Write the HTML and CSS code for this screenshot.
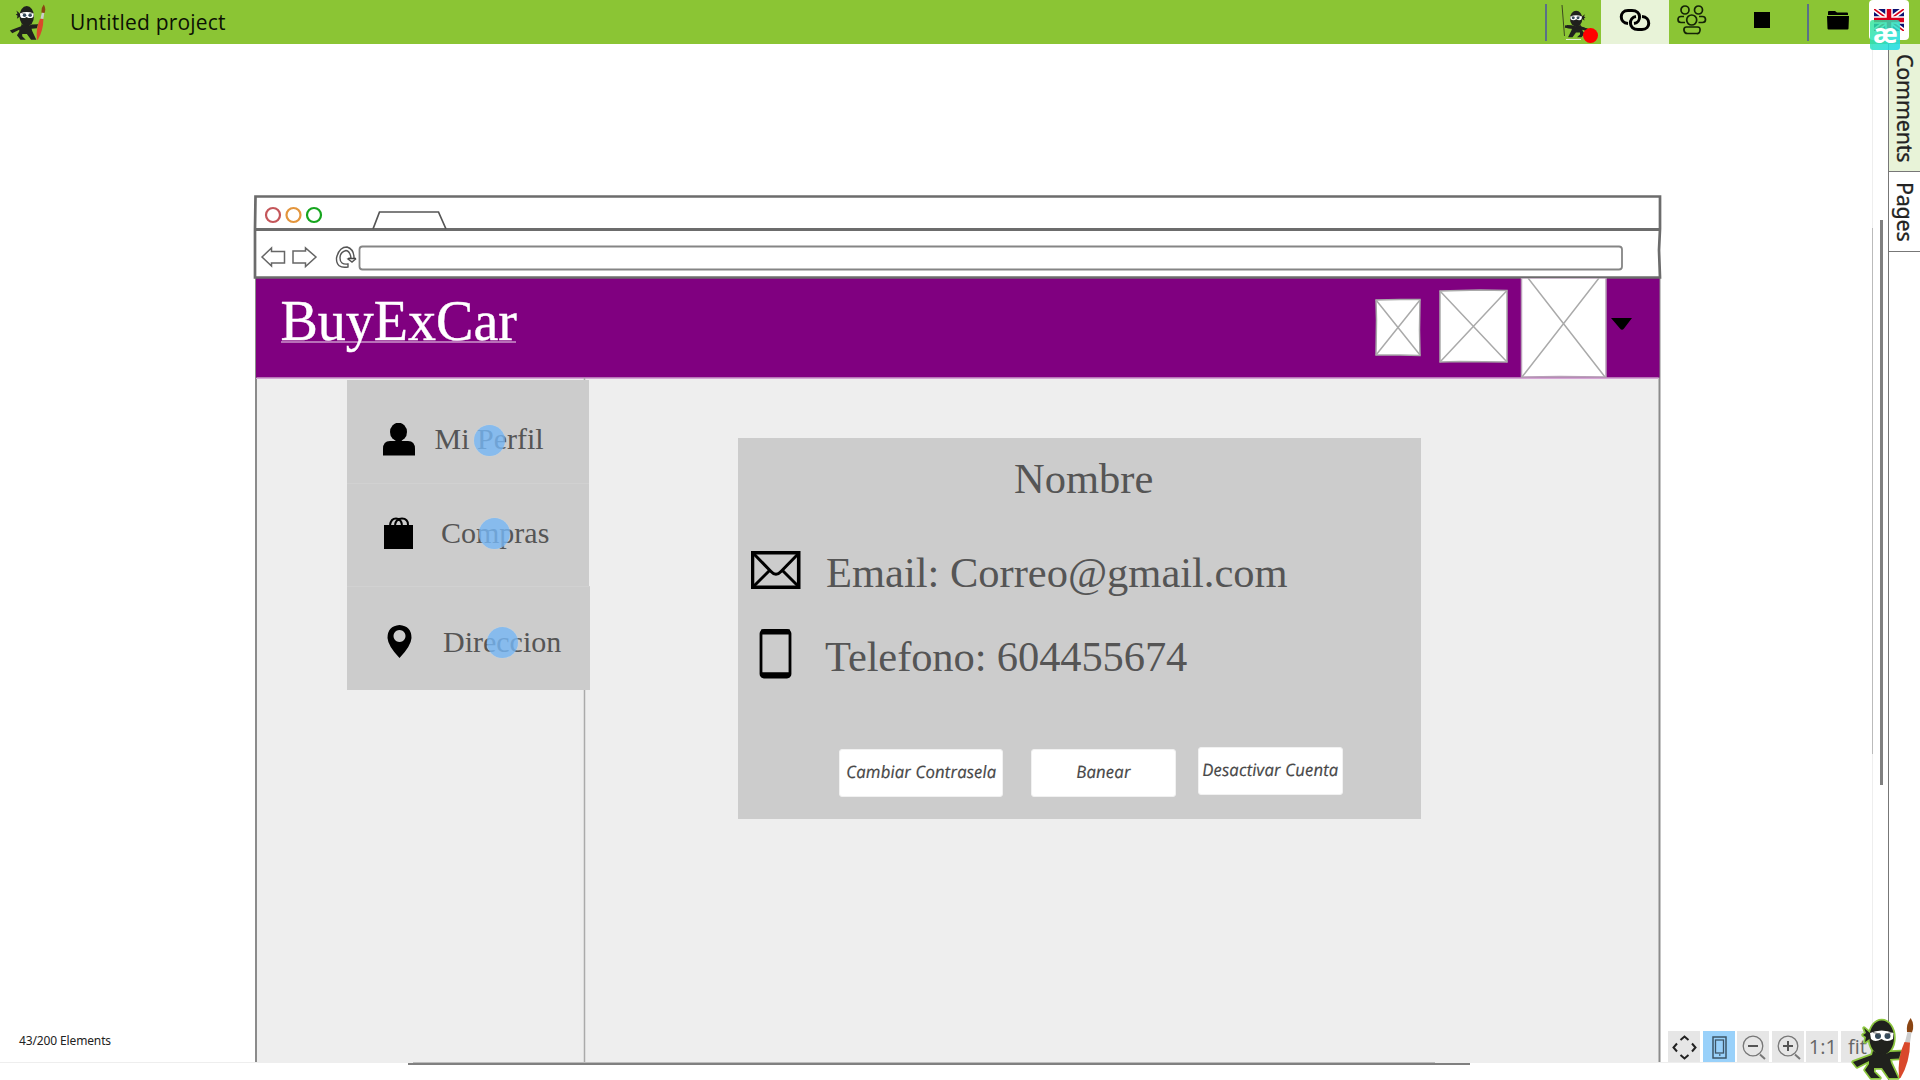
FILE: index.html
```html
<!DOCTYPE html>
<html lang="en">
<head>
<meta charset="utf-8">
<title>Untitled project</title>
<link rel="stylesheet" href="styles.css">
</head>
<body>
<svg class="defs" width="0" height="0">
  <defs>
    <g id="ninja-body">
      <path d="M8 13 L2 8 L4 13 L1 15 L4 17 L3 22 L9 18 Z"/>
      <ellipse cx="19.700" cy="17.800" rx="12.300" ry="17.300"/>
      <path d="M11 31 Q20 37 28 32 L39 31.500 L37 38.500 L28 39 L29 43 L36 58 L27 58 L20 48 L12 48 L12 52 L18 58 L9 58 L3 50 L7 44 L7 41 L-5 47 L-9 42 L10 35 Z"/>
    </g>
    <g id="ninja-face">
      <path d="M8 13 Q19.500 8 31.500 13 L31 19 Q25 23 19.500 19 Q13 23 9 19 Z" fill="#fff"/>
      <circle cx="16" cy="16" r="3" fill="#34495a"/><circle cx="25.500" cy="16" r="3" fill="#34495a"/>
      <path d="M11 12.500L18 14M30 12.500L23.500 14" stroke="#777" stroke-width="1"/>
    </g>
    <g id="brush">
      <path d="M45 12 Q44 4 48.700 -2 Q53 5 50 12.500 Z" fill="#8a4513"/>
      <path d="M45.500 12 L49.500 12.500 L48 22.500 L43 22 Z" fill="#ccc"/>
      <path d="M42.500 22 L48 22.500 Q48 42 38.500 58 L37 58 Q35 38 42.500 22 Z" fill="#d9482b"/>
    </g>
  </defs>
</svg>
<div class="app">
  <header class="topbar">
    <svg class="logo" viewBox="-10 -3 62 63"><use href="#ninja-body" fill="#20211d"/><use href="#ninja-face"/><use href="#brush"/></svg>
    <h1 class="project-name">Untitled project</h1>
    <nav class="tools">
      <i class="divider"></i>
      <span class="tool tool-record">
        <svg width="40" height="44" viewBox="0 0 40 44">
          <path d="M2 5 L4.500 36" stroke="#3c4a20" stroke-width="1"/>
          <g transform="translate(26 10.500) scale(-.5 .46)"><use href="#ninja-body" fill="#20211d"/><use href="#ninja-face"/></g>
          <path d="M16 26L30 31M5 26.500L16 28" stroke="#20211d" stroke-width="2.500"/>
          <path d="M6 39.500h15" stroke="#e5eed8"/>
          <circle cx="30.500" cy="35.500" r="7.500" fill="#f00"/>
        </svg>
      </span>
      <span class="tool tool-link">
        <svg width="32" height="24" viewBox="0 0 32 24" fill="none" stroke="#000" stroke-width="3">
          <path d="M9 15.500 C0 15 0 2.500 9 2.500 H13 C23 2.500 22.500 14.500 15 15.500"/>
          <path d="M23 8.500 C32 9 32 21.500 23 21.500 H19 C9 21.500 9.500 9.500 17 8.500"/>
        </svg>
      </span>
      <span class="tool tool-group">
        <svg width="30" height="30" viewBox="0 0 30 30" fill="none" stroke="#142307" stroke-width="1.700">
          <circle cx="8" cy="5" r="4"/><circle cx="21.500" cy="5" r="4"/><circle cx="14.700" cy="15" r="5"/>
          <path d="M7 11.500H4Q1 11.500 1 14.500T4 17.500H8M22 11.500h3.500q3 0 3 3t-3 3H21.500M9 22h11.500q3 0 2.500 3.500t-3.500 3H10.500q-3 0-3.500-3T9 22"/>
        </svg>
      </span>
      <span class="tool tool-stop"><i class="stop"></i></span>
      <i class="divider"></i>
      <span class="tool tool-folder">
        <svg width="22" height="19" viewBox="0 0 22 19"><path d="M1 5V1Q1 0 2 0H8L10 1.500H20Q21 1.500 21 2.500V4H1ZM0 5H22L21.500 17.500Q21.500 18.500 20.500 18.500H1.500Q.500 18.500 .500 17.500Z"/></svg>
      </span>
      <span class="language">
        <svg width="30" height="22" viewBox="0 0 30 22">
          <path d="M0 0h30v22H0z" fill="#0a1172"/>
          <path d="M0 0L30 22M30 0L0 22" stroke="#fff" stroke-width="5"/>
          <path d="M0 0L30 22M30 0L0 22" stroke="#d8001c" stroke-width="1.700"/>
          <path d="M15 0V22M0 11H30" stroke="#fff" stroke-width="7.500"/>
          <path d="M15 0V22M0 11H30" stroke="#d8001c" stroke-width="4.500"/>
        </svg>
        <b class="ae-badge">æ</b>
      </span>
    </nav>
  </header>

  <main class="workspace">
    <section class="canvas">
      <svg class="wire frame" width="1410" height="868" viewBox="253 194 1410 868" fill="none">
        <path d="M256 278V1064H1659.500V278" fill="#eee" stroke="#8b8b8b" stroke-width="2"/>
        <path d="M256 278H1659.500V377.500H256Z" fill="#800080"/>
        <path d="M256 378.500H1659" stroke="#d4a6d4"/>
        <path d="M255.500 196.500H1660V229L1659 250L1660 277.500H255V229Z" fill="#fff" stroke="#6c6c6c" stroke-width="2.700"/>
        <path d="M255 229.500H1659" stroke="#6c6c6c" stroke-width="3"/>
        <circle cx="273" cy="215" r="7" stroke="#c4565a" stroke-width="2.200"/>
        <circle cx="293.500" cy="215" r="7" stroke="#e3953c" stroke-width="2.200"/>
        <circle cx="314" cy="215" r="7" stroke="#16a51e" stroke-width="2.200"/>
        <path d="M373 229L379.500 212H438.500L446 229" stroke="#555" stroke-width="1.700"/>
        <path d="M262 257L271.500 248V251.500H284.500V263H271.500V266L262 257ZM316 257L305.500 248V251H293V263H305.500V266.500Z" stroke="#666" stroke-width="1.500"/>
        <path d="M348 267Q336 269 336.500 258Q339 247 347 247Q354 249 354 258L355.500 259L352 262L348 259L351 258Q350 251 346 250.500Q340 252 340 258Q340 265 348 264Z" stroke="#555" stroke-width="1.400"/>
        <path d="M348 258.500H356" stroke="#444" stroke-width="1.500"/>
        <rect x="359.500" y="246.500" width="1262.500" height="23" rx="3" stroke="#858585" stroke-width="1.800"/>
        <path d="M584.500 378V1062" stroke="#aaa" stroke-width="1.500"/>
      </svg>

      <span class="label brand">BuyExCar</span>
      <svg class="wire thumbs" width="257" height="100" viewBox="1375 278 257 100" fill="#fff" stroke="#aaa" stroke-width="1.500">
        <path d="M1376 300L1400 299.500L1420 299.500L1419.500 330L1420 355.500L1400 355L1376 355L1376.500 320Z"/>
        <path d="M1376 300L1420 355M1420 300L1376 355"/>
        <path d="M1440 291L1480 290L1507 290.500L1507 362L1460 361.500L1440 362Z"/>
        <path d="M1440 291L1507 362M1507 290.500L1440 362"/>
        <path d="M1521.500 278H1606V377L1560 376.500L1521.500 377Z" stroke="#b8a0b8"/>
        <path d="M1528 278L1605 377M1599 278L1522 377"/>
        <path d="M1611 318H1632L1624 328.500Q1622 331 1620 328.500Z" fill="#000" stroke="none"/>
      </svg>

      <div class="menu-card menu-profile"></div>
      <div class="menu-card menu-orders"></div>
      <div class="menu-card menu-address"></div>
      <svg class="wire menu-icons" width="34" height="236" viewBox="382 423 34 236">
        <ellipse cx="398.500" cy="432" rx="8.500" ry="9.300"/>
        <path d="M396 438h5.500v3H408Q415 441 415 449V455.500H383V449Q383 441 390 441H396Z"/>
        <path d="M384 525H413V549H384Z"/>
        <path d="M390 525Q391 518.500 396 518.500T402 525M395 525Q396 518.500 402 518.500T408 525" fill="none" stroke="#000" stroke-width="2"/>
        <path fill-rule="evenodd" d="M399.500 625Q411.500 626 411.500 638Q411 646 399.500 658Q388 646 387.500 638Q387.500 626 399.500 625ZM399.500 630a6 6 0 1 0 .010 0Z"/>
      </svg>
      <span class="label item profile-label">Mi Perfil</span>
      <span class="label item orders-label">Compras</span>
      <span class="label item address-label">Direccion</span>
      <i class="hotspot hot-profile"></i>
      <i class="hotspot hot-orders"></i>
      <i class="hotspot hot-address"></i>

      <div class="panel"></div>
      <span class="label big name">Nombre</span>
      <span class="label big email">Email: Correo@gmail.com</span>
      <span class="label big phone">Telefono: 604455674</span>
      <svg class="wire contact-icons" width="50" height="128" viewBox="751 551 50 128" fill="none" stroke="#000">
        <path d="M752.500 552.800H798.700V587.300H752.500Z" stroke-width="3.600"/>
        <path d="M753 553L771 571.500Q776 577 781 571.500L799 553M753 587L769 571M799 587L783 571" stroke-width="3"/>
        <rect x="761" y="630.500" width="29" height="46.500" rx="3" stroke-width="2.800"/>
        <path d="M761 632H790M761 674.800H790" stroke-width="5"/>
      </svg>
      <button class="sketch-btn btn-password"><span>Cambiar Contrasela</span></button>
      <button class="sketch-btn btn-ban"><span>Banear</span></button>
      <button class="sketch-btn btn-disable"><span>Desactivar Cuenta</span></button>

      <p class="counter">43/200 Elements</p>
      <div class="zoombar">
        <span class="zoom-btn"><svg width="32" height="32" viewBox="0 0 32 32" fill="none" stroke="#222" stroke-width="2"><path d="M12.500 9L16.500 5.500L20.500 9M12.500 24L16.500 27.500L20.500 24M9 12.500L5.500 16.500L9 20.500M24 12.500L27.500 16.500L24 20.500"/></svg></span>
        <span class="zoom-btn active"><svg width="32" height="32" viewBox="0 0 32 32" fill="none" stroke="#3d5567"><rect x="10" y="6" width="13" height="21" stroke-width="1.500"/><rect x="12.500" y="9" width="8" height="13" stroke-width="1.300"/><path d="M16 24h1.500" stroke-width="1.500"/></svg></span>
        <span class="zoom-btn"><svg width="32" height="32" viewBox="0 0 32 32" fill="none" stroke="#777"><circle cx="16" cy="15" r="9.800" stroke-width="1.300"/><path d="M23 23.500L28 28" stroke-width="2"/><path d="M11 15H21" stroke="#555" stroke-width="2"/></svg></span>
        <span class="zoom-btn"><svg width="32" height="32" viewBox="0 0 32 32" fill="none" stroke="#777"><circle cx="16" cy="15" r="9.800" stroke-width="1.300"/><path d="M23 23.500L28 28" stroke-width="2"/><path d="M11 15H21M16 10V20" stroke="#555" stroke-width="2"/></svg></span>
        <span class="zoom-btn">1:1</span>
        <span class="zoom-btn">fit</span>
      </div>
    </section>
    <i class="track-v"></i><i class="thumb-v"></i>
    <i class="track-h"></i><i class="thumb-h"></i>
    <aside class="side">
      <div class="side-tab comments">Comments</div>
      <div class="side-tab pages">Pages</div>
    </aside>
  </main>
  <svg class="mascot" width="70" height="66" viewBox="-12 -6 70 66">
    <use href="#ninja-body" fill="#8cc63f" stroke="#8cc63f" stroke-width="3.500" stroke-linejoin="round"/>
    <use href="#ninja-body" fill="#20211d"/><use href="#ninja-face"/><use href="#brush"/>
  </svg>
</div>
</body>
</html>
```
FILE: styles.css
```css
* { box-sizing: border-box; }
body { margin: 0; overflow: hidden; background: #fff; font-family: "Open Sans", "Noto Sans", sans-serif; }
.defs { position: absolute; }
.app { position: relative; width: 1920px; height: 1080px; display: grid; grid-template-rows: 44px 1fr; overflow: hidden; }

/* top bar */
.topbar { display: flex; align-items: center; background: #8bc534; padding-left: 9px; z-index: 2; }
.logo { width: 37px; height: 37px; margin-right: 24px; }
.project-name { margin: 0; font: 400 21px/44px "Open Sans", sans-serif; letter-spacing: .2px; color: #0c1104; white-space: nowrap; }
.tools { display: flex; margin-left: auto; height: 44px; align-items: center; }
.divider { width: 2px; height: 37px; background: #5a7088; }
.tool { display: flex; justify-content: center; align-items: center; height: 44px; }
.tool-record { width: 54px; padding-left: 13px; justify-content: flex-start; }
.tool-link { width: 68px; background: #e8f3d8; padding-bottom: 4px; }
.tool-group { width: 47px; padding: 0 1px 5px 0; }
.tool-stop { width: 91px; padding: 0 0 4px 1px; }
.stop { width: 16px; height: 16px; background: #000; }
.tool-folder { width: 60px; padding: 0 3px 4px 0; }
.language { position: relative; width: 40px; height: 40px; margin: 0 11px 4px 0; padding: 9px 5px; background: #fff; border-radius: 4px; }
.language svg { display: block; }
.ae-badge { position: absolute; left: 1px; top: 20px; width: 30px; height: 30px; border-radius: 3px; background: linear-gradient(135deg, #32e692d0, #1fdcf0e0); color: #fff; font: 700 27px/25px "Open Sans", sans-serif; text-align: center; letter-spacing: -1px; }

/* workspace */
.workspace { position: relative; display: grid; grid-template-columns: 1888px 32px; }
.canvas { position: relative; height: 1018px; overflow: hidden; }
.wire, .label, .menu-card, .panel, .hotspot, .sketch-btn { position: absolute; }
.frame { left: 253px; top: 150px; }
.thumbs { left: 1375px; top: 234px; }
.menu-icons { left: 382px; top: 379px; }
.contact-icons { left: 751px; top: 507px; }

.label { font-family: "Liberation Serif", serif; color: #555; white-space: nowrap; line-height: 1; }
.brand { left: 280.500px; top: 249px; font-size: 56px; color: #fff; -webkit-text-stroke: .4px #fff; }
.brand::after { content: ""; position: absolute; left: 0; right: 1px; top: 48px; height: 2px; background: #ffffff70; }
.item { font-size: 30px; }
.profile-label { left: 434.500px; top: 380px; }
.orders-label { left: 441px; top: 474px; }
.address-label { left: 443px; top: 583px; }
.big { font-size: 42.500px; }
.name { left: 1014px; top: 414px; }
.email { left: 826px; top: 508px; }
.phone { left: 825px; top: 592px; letter-spacing: -.1px; }

.menu-card { background: #ccc; width: 242px; height: 103px; }
.menu-profile { left: 347px; top: 336px; width: 241.500px; height: 104px; }
.menu-orders { left: 346.500px; top: 439px; height: 104px; border-top: 1px solid #d1d1d1; }
.menu-address { left: 347px; top: 542px; width: 242.500px; height: 104px; border-top: 1px solid #d1d1d1; }
.hotspot { width: 31px; height: 31px; border-radius: 50%; background: #76b7f5cc; box-shadow: 0 0 1px #bfe0ff; }
.hot-profile { left: 473.500px; top: 380.500px; }
.hot-orders { left: 479px; top: 473.500px; }
.hot-address { left: 486.500px; top: 582.500px; }
.panel { left: 738px; top: 394px; width: 683px; height: 381px; background: #ccc; }

.sketch-btn { height: 48px; border: 1px solid #f1f1f1; border-radius: 3px; background: #fff; padding: 0; display: flex; align-items: center; justify-content: center; font: italic 400 17px/1 "Open Sans", sans-serif; color: #484848; white-space: nowrap; -webkit-text-stroke: .2px #484848; }
.sketch-btn span { transform: scaleX(1) skewX(4deg); margin-bottom: 3px; }
.btn-password { left: 839px; top: 705px; width: 164px; }
.btn-ban { left: 1031px; top: 705px; width: 145px; }
.btn-disable { left: 1198px; top: 703px; width: 145px; }

.counter { position: absolute; left: 19px; top: 988px; margin: 0; font: 12px/18px "Noto Sans", sans-serif; letter-spacing: -.13px; color: #222; }
.zoombar { position: absolute; left: 1668px; top: 987px; display: flex; gap: 2.600px; }
.zoom-btn { width: 32px; height: 32px; background: #e6e6e6; color: #666; font: 20px/32px "Open Sans", sans-serif; text-align: center; padding-left: 1px; }
.zoom-btn.active { background: #99d1fa; }
.zoom-btn svg { display: block; margin-left: -1px; }

/* scroll bars */
.track-v { position: absolute; left: 1872px; top: 0; width: 1px; height: 1018px; background: linear-gradient(#eee 184px, #bbb 184px 710px, #eee 710px); }
.thumb-v { position: absolute; left: 1880px; top: 176px; width: 3px; height: 565px; background: #808080; }
.track-h { position: absolute; left: 0; top: 1018px; width: 1872px; height: 1px; background: linear-gradient(90deg, #eee 413px, #bbb 413px 1435px, #eee 1435px); }
.thumb-h { position: absolute; left: 408px; top: 1019px; width: 1062px; height: 2px; background: #808080; }

/* side tabs */
.side { border-left: 1px solid #777; display: flex; flex-direction: column; }
.side-tab { writing-mode: vertical-rl; border-bottom: 1px solid #777; font: 21.500px/29px "Noto Sans", sans-serif; letter-spacing: -.25px; -webkit-text-stroke: .3px #222; color: #222; width: 31px; }
.comments { height: 128px; background: #e8f3d8; padding-top: 10px; }
.pages { height: 80px; padding-top: 10px; }
.mascot { position: absolute; left: 1850px; top: 1014px; z-index: 3; }
```
